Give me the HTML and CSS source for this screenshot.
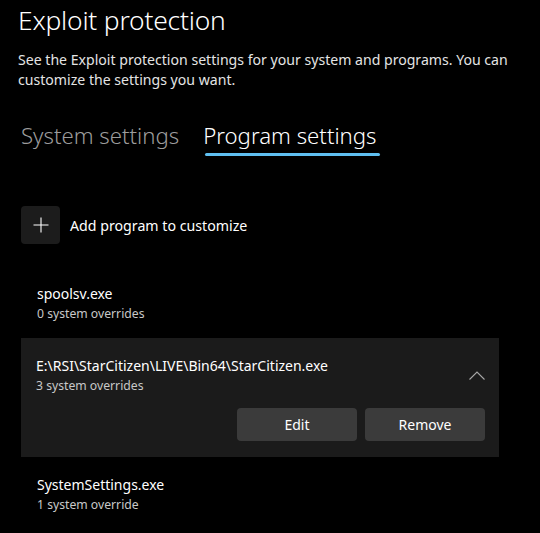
FILE: index.html
```html
<!DOCTYPE html>
<html lang="en">
<head>
<meta charset="utf-8">
<title>Exploit protection</title>
<link rel="stylesheet" href="styles.css">
</head>
<body>
<main class="page">
  <h1 class="title">Exploit protection</h1>
  <p class="desc">See the Exploit protection settings for your system and programs. You can customize the settings you want.</p>
  <nav class="tabs">
    <span class="tab">System settings</span>
    <span class="tab active">Program settings</span>
  </nav>
  <div class="add-row">
    <button class="add-btn" aria-label="Add">
      <svg width="16" height="16" viewBox="0 0 16 16"><path d="M8 0.5V15.5M0.5 8H15.5" stroke="#fff" stroke-width="1.1" fill="none"/></svg>
    </button>
    <span class="add-label">Add program to customize</span>
  </div>
  <ul class="list">
    <li class="item">
      <div class="name">spoolsv.exe</div>
      <div class="sub">0 system overrides</div>
    </li>
    <li class="item expanded">
      <div class="head">
        <div>
          <div class="name">E:\RSI\StarCitizen\LIVE\Bin64\StarCitizen.exe</div>
          <div class="sub">3 system overrides</div>
        </div>
        <svg class="chev" width="16" height="9" viewBox="0 0 16 9"><path d="M0.5 8.5L8 1L15.5 8.5" stroke="#a8a8a8" stroke-width="1.1" fill="none"/></svg>
      </div>
      <div class="actions">
        <button class="btn">Edit</button>
        <button class="btn">Remove</button>
      </div>
    </li>
    <li class="item">
      <div class="name">SystemSettings.exe</div>
      <div class="sub">1 system override</div>
    </li>
  </ul>
</main>
</body>
</html>
```

FILE: styles.css
```css
* { box-sizing: border-box; }
html, body { margin: 0; padding: 0; }
body {
  background: #000;
  color: #fff;
  font-family: "Segoe UI", "Noto Sans", "Open Sans", sans-serif;
  width: 540px;
  height: 533px;
  overflow: hidden;
}
.page { padding: 0 0 0 18px; }
.title {
  margin: 0;
  font-size: 26.4px;
  font-weight: 300;
  line-height: 40px;
  letter-spacing: -0.2px;
}
.desc {
  margin: 10px 0 0;
  width: 512px;
  font-size: 14.1px;
  line-height: 20px;
  color: #e4e4e4;
}
.tabs {
  display: flex;
  gap: 24px;
  margin-top: 30px;
  padding-left: 3px;
}
.tab {
  position: relative;
  font-size: 22.2px;
  font-weight: 300;
  line-height: 32px;
  color: #9c9c9c;
  padding-bottom: 4px;
}
.tab.active { color: #fff; }
.tab.active::after {
  content: "";
  position: absolute;
  left: 2px;
  right: -3px;
  bottom: 0;
  height: 3px;
  border-radius: 2px;
  background: #5fbff0;
}
.add-row {
  display: flex;
  align-items: center;
  gap: 10px;
  margin-top: 50px;
  padding-left: 3px;
}
.add-btn {
  width: 39px;
  height: 38px;
  border: 0;
  border-radius: 4px;
  background: #1c1c1c;
  display: flex;
  align-items: center;
  justify-content: center;
  padding: 0;
}
.add-label { font-size: 14.2px; }
.list {
  list-style: none;
  margin: 22px 0 0 3px;
  padding: 0;
  width: 478px;
}
.item { padding: 18px 15px 16px 16px; }
.name { font-size: 14px; line-height: 20px; }
.sub { font-size: 12.2px; line-height: 16px; color: #c8c8c8; margin-top: 2px; }
.expanded {
  background: #1b1b1b;
  padding: 18px 14px 16px 15px;
}
.head { display: flex; align-items: center; justify-content: space-between; }
.actions {
  display: flex;
  justify-content: flex-end;
  gap: 8px;
  margin-top: 14px;
}
.btn {
  width: 120px;
  height: 33px;
  border: 0;
  border-radius: 4px;
  background: #3b3b3b;
  color: #fff;
  font-family: inherit;
  font-size: 14px;
}
```
